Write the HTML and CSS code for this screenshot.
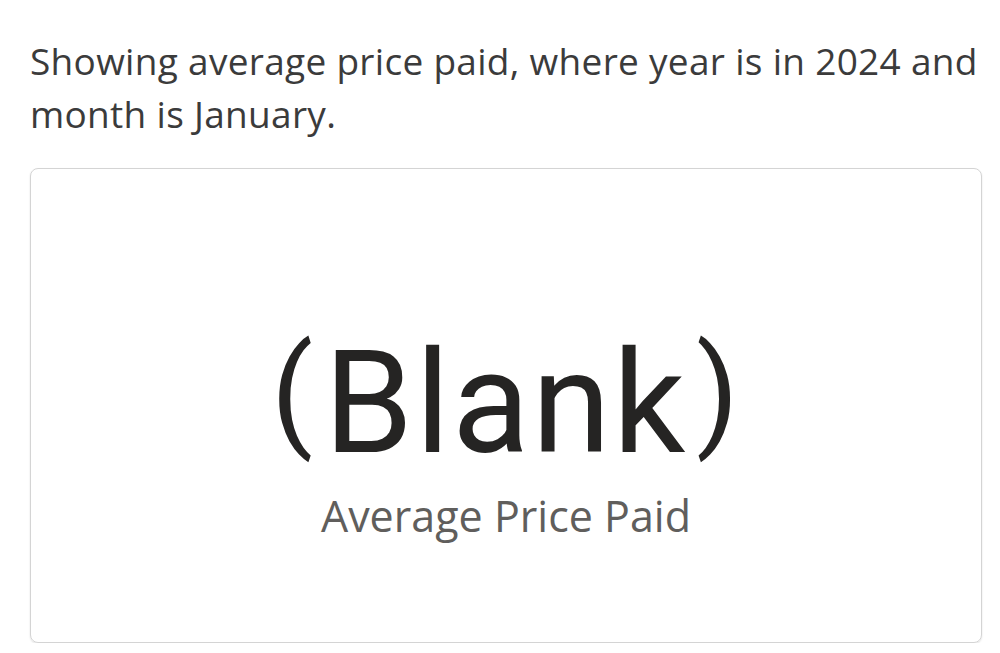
FILE: index.html
```html
<!DOCTYPE html>
<html>
<head>
<meta charset="utf-8">
<link rel="stylesheet" href="styles.css">
</head>
<body>
<div class="page">
  <p class="summary">Showing average price paid, where year is in 2024 and month is January.</p>
  <div class="card">
    <div class="value"><span class="paren">(</span>Blank<span class="paren">)</span></div>
    <div class="label">Average Price Paid</div>
  </div>
</div>
</body>
</html>
```
FILE: styles.css
```css
html, body {
  margin: 0;
  padding: 0;
  background: #ffffff;
}
.page {
  padding: 34px 18px 0 30px;
  width: 952px;
}
.summary {
  margin: 0;
  font-family: "Open Sans", sans-serif;
  font-size: 37px;
  line-height: 53px;
  letter-spacing: 0.3px;
  color: #3b3b3b;
  width: 968px;
}
.card {
  margin-top: 28px;
  width: 952px;
  height: 475px;
  border: 1px solid #d4d4d4;
  border-radius: 8px;
  box-shadow: 0 1px 2px rgba(0,0,0,0.12);
  display: flex;
  flex-direction: column;
  align-items: center;
  padding-top: 163px;
  box-sizing: border-box;
}
.value {
  font-family: Roboto, sans-serif;
  font-size: 143px;
  line-height: 143px;
  letter-spacing: 2px;
  color: #252423;
}
.paren {
  font-size: 122px;
  line-height: 0;
  vertical-align: 18px;
  font-weight: 400;
  margin: 0 9px;
}
.label {
  margin-top: 16px;
  font-family: "Open Sans", sans-serif;
  font-size: 43px;
  line-height: 50px;
  color: #605e5c;
}
```
